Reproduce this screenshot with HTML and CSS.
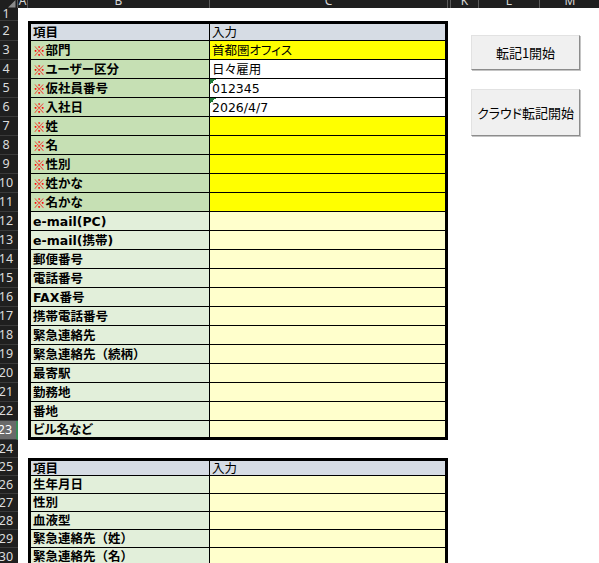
FILE: index.html
```html
<!DOCTYPE html>
<html lang="ja">
<head>
<meta charset="utf-8">
<title>入力シート</title>
<link rel="stylesheet" href="styles.css">
</head>
<body>
<div class="sheet">
  <div class="colhdr">
    <div class="h corner"><svg width="8" height="8" viewBox="0 0 8 8"><polygon points="7.5,0 7.5,7.5 0,7.5" fill="#8a8a8a"/></svg></div>
    <div class="h ca"><b>A</b></div>
    <div class="h cb"><b>B</b></div>
    <div class="h cc"><b>C</b></div>
    <div class="h hid"></div>
    <div class="h ck"><b>K</b></div>
    <div class="h cl"><b>L</b></div>
    <div class="h cm"><b>M</b></div>
  </div>

  <div class="row r13"><div class="rh">1</div></div>

  <div class="row r20 t top hdr"><div class="rh">2</div><div class="ca"></div><div class="cb">項目</div><div class="cc">入力</div></div>
  <div class="row t req"><div class="rh">3</div><div class="ca"></div><div class="cb"><span class="mark">※</span>部門</div><div class="cc yel">首都圏オフィス</div></div>
  <div class="row t req"><div class="rh">4</div><div class="ca"></div><div class="cb"><span class="mark">※</span>ユーザー区分</div><div class="cc wht">日々雇用</div></div>
  <div class="row t req"><div class="rh">5</div><div class="ca"></div><div class="cb"><span class="mark">※</span>仮社員番号</div><div class="cc wht flag">012345</div></div>
  <div class="row t req"><div class="rh">6</div><div class="ca"></div><div class="cb"><span class="mark">※</span>入社日</div><div class="cc wht flag">2026/4/7</div></div>
  <div class="row t req"><div class="rh">7</div><div class="ca"></div><div class="cb"><span class="mark">※</span>姓</div><div class="cc yel"></div></div>
  <div class="row t req"><div class="rh">8</div><div class="ca"></div><div class="cb"><span class="mark">※</span>名</div><div class="cc yel"></div></div>
  <div class="row t req"><div class="rh">9</div><div class="ca"></div><div class="cb"><span class="mark">※</span>性別</div><div class="cc yel"></div></div>
  <div class="row t req"><div class="rh">10</div><div class="ca"></div><div class="cb"><span class="mark">※</span>姓かな</div><div class="cc yel"></div></div>
  <div class="row t req"><div class="rh">11</div><div class="ca"></div><div class="cb"><span class="mark">※</span>名かな</div><div class="cc yel"></div></div>
  <div class="row t opt"><div class="rh">12</div><div class="ca"></div><div class="cb">e-mail(PC)</div><div class="cc"></div></div>
  <div class="row t opt"><div class="rh">13</div><div class="ca"></div><div class="cb">e-mail(携帯)</div><div class="cc"></div></div>
  <div class="row t opt"><div class="rh">14</div><div class="ca"></div><div class="cb">郵便番号</div><div class="cc"></div></div>
  <div class="row t opt"><div class="rh">15</div><div class="ca"></div><div class="cb">電話番号</div><div class="cc"></div></div>
  <div class="row t opt"><div class="rh">16</div><div class="ca"></div><div class="cb">FAX番号</div><div class="cc"></div></div>
  <div class="row t opt"><div class="rh">17</div><div class="ca"></div><div class="cb">携帯電話番号</div><div class="cc"></div></div>
  <div class="row t opt"><div class="rh">18</div><div class="ca"></div><div class="cb">緊急連絡先</div><div class="cc"></div></div>
  <div class="row t opt"><div class="rh">19</div><div class="ca"></div><div class="cb nopalt">緊急連絡先（続柄）</div><div class="cc"></div></div>
  <div class="row t opt"><div class="rh">20</div><div class="ca"></div><div class="cb">最寄駅</div><div class="cc"></div></div>
  <div class="row t opt"><div class="rh">21</div><div class="ca"></div><div class="cb">勤務地</div><div class="cc"></div></div>
  <div class="row t opt"><div class="rh">22</div><div class="ca"></div><div class="cb">番地</div><div class="cc"></div></div>
  <div class="row t opt bot"><div class="rh sel">23</div><div class="ca"></div><div class="cb">ビル名など</div><div class="cc"></div></div>

  <div class="row r18"><div class="rh">24</div></div>

  <div class="row r18 t top hdr"><div class="rh">25</div><div class="ca"></div><div class="cb">項目</div><div class="cc">入力</div></div>
  <div class="row r18 t opt"><div class="rh">26</div><div class="ca"></div><div class="cb">生年月日</div><div class="cc"></div></div>
  <div class="row r18 t opt"><div class="rh">27</div><div class="ca"></div><div class="cb">性別</div><div class="cc"></div></div>
  <div class="row r18 t opt"><div class="rh">28</div><div class="ca"></div><div class="cb">血液型</div><div class="cc"></div></div>
  <div class="row r18 t opt"><div class="rh">29</div><div class="ca"></div><div class="cb nopalt">緊急連絡先（姓）</div><div class="cc"></div></div>
  <div class="row r18 t opt"><div class="rh">30</div><div class="ca"></div><div class="cb nopalt">緊急連絡先（名）</div><div class="cc"></div></div>

  <div class="btn b1">転記1開始</div>
  <div class="btn b2">クラウド転記開始</div>
</div>
</body>
</html>
```

FILE: styles.css
```css
html, body {
  margin: 0;
  padding: 0;
  background: #ffffff;
}

body {
  overflow: hidden;
  font-family: "Noto Sans CJK JP", "Noto Sans", sans-serif;
  color: #000;
}

.sheet {
  position: relative;
  width: 599px;
  height: 563px;
  overflow: hidden;
}

/* column header strip */
.colhdr {
  display: flex;
  height: 8px;
  background: #1f1f1f;
  overflow: hidden;
}

.colhdr .h {
  box-sizing: border-box;
  height: 8px;
  border-right: 1px solid #5a5a5a;
  overflow: hidden;
  text-align: center;
  color: #d6d6d6;
}

.colhdr .h b {
  display: block;
  margin-top: -6px;
  font: normal 12px/14px "Noto Sans", sans-serif;
}

.colhdr .corner {
  flex: 0 0 18px;
  display: flex;
  justify-content: flex-end;
  align-items: flex-start;
  padding-right: 1px;
}

.colhdr .corner svg {
  display: block;
}

.colhdr .hid {
  flex: 0 0 3px;
}

.ca { flex: 0 0 10px; }
.cb { flex: 0 0 182px; }
.cc { flex: 0 0 238px; }
.ck { flex: 0 0 28px; }
.cl { flex: 0 0 61px; }
.cm { flex: 1 0 61px; }

/* rows */
.row {
  display: flex;
  height: 19px;
}

.r13 { height: 13px; }
.r18 { height: 18px; }
.r20 { height: 20px; }

.rh {
  flex: 0 0 24px;
  margin-left: -6px;
  box-sizing: border-box;
  background: #1f1f1f;
  border-bottom: 1px solid #3a3a3a;
  color: #dcdcdc;
  font: 12.5px/14px "Noto Sans", sans-serif;
  display: flex;
  align-items: center;
  justify-content: center;
}

.rh.sel {
  background: #6a6a6a;
  color: #ffffff;
  border-right: 2px solid #3a8a55;
}

/* table cells */
.t .cb,
.t .cc {
  box-sizing: border-box;
  display: flex;
  align-items: center;
  white-space: nowrap;
  overflow: hidden;
  font-family: "DejaVu Sans", "Noto Sans CJK JP", sans-serif;
  font-size: 12.5px;
  line-height: 14px;
  font-feature-settings: "palt";
  padding-left: 2px;
  padding-top: 1px;
  border-bottom: 1px solid #000;
}

.t .cb.nopalt {
  font-feature-settings: normal;
}

.t .cb {
  border-left: 3px solid #000;
  border-right: 1px solid #000;
  font-weight: bold;
}

.t .cc {
  border-right: 3px solid #000;
  background: #ffffcc;
}

.top .cb,
.top .cc {
  border-top: 3px solid #000;
}

.bot .cb,
.bot .cc {
  border-bottom: 3px solid #000;
}

.hdr .cb { background: #d6dce4; }
.hdr .cc { background: #d6dce4; font-weight: normal; }

.req .cb { background: #c6e0b4; }
.opt .cb { background: #e2efda; }

.t .cc.yel { background: #ffff00; }
.t .cc.wht { background: #ffffff; }

.t .cc.flag {
  background: linear-gradient(135deg, #1f7a37 50%, transparent 50%) no-repeat 0 0 / 6px 6px, #ffffff;
}

.mark {
  color: #ff0000;
  font-family: "Noto Sans CJK JP", sans-serif;
}

/* form buttons floating over the sheet */
.btn {
  position: absolute;
  left: 471px;
  width: 109px;
  box-sizing: border-box;
  background: #f0f0f0;
  border: 1px solid;
  border-color: #e2e2e2 #8c8c8c #8c8c8c #e2e2e2;
  box-shadow: 1px 1px 0 #c4c4c4;
  display: flex;
  align-items: center;
  justify-content: center;
  font-size: 13px;
  font-feature-settings: "palt";
  white-space: nowrap;
  color: #000;
}

.b1 { top: 35px; height: 35px; }
.b2 { top: 89px; height: 47px; }
```
